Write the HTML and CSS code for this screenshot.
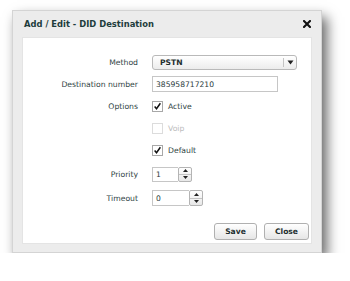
FILE: index.html
```html
<!DOCTYPE html>
<html>
<head>
<meta charset="utf-8">
<link rel="stylesheet" href="styles.css">
</head>
<body>
<div class="dialog">
  <div class="titlebar">
    <span class="title">Add / Edit - DID Destination</span>
    <span class="close"><svg width="8" height="8" viewBox="0 0 8 8"><path d="M1 1 L7 7 M7 1 L1 7" stroke="#111" stroke-width="2.1" stroke-linecap="square"/></svg></span>
  </div>
  <div class="panel">
    <div class="form">
      <label class="lbl">Method</label>
      <div class="select"><span class="sel-text">PSTN</span><span class="sel-arrow"><svg width="7" height="5" viewBox="0 0 7 5"><path d="M0.5 0.5 L6.5 0.5 L3.5 4.5 Z" fill="#222"/></svg></span></div>

      <label class="lbl">Destination number</label>
      <div class="input wide">385958717210</div>

      <label class="lbl">Options</label>
      <div class="check"><span class="box on"><svg width="11" height="11" viewBox="0 0 11 11"><path d="M2 5.5 L4.3 8.3 L9 1.5" fill="none" stroke="#111" stroke-width="1.8"/></svg></span><span class="ctext">Active</span></div>

      <span></span>
      <div class="check disabled"><span class="box"></span><span class="ctext">Voip</span></div>

      <span></span>
      <div class="check"><span class="box on"><svg width="11" height="11" viewBox="0 0 11 11"><path d="M2 5.5 L4.3 8.3 L9 1.5" fill="none" stroke="#111" stroke-width="1.8"/></svg></span><span class="ctext">Default</span></div>

      <label class="lbl">Priority</label>
      <div class="spin"><div class="input num p">1</div><div class="spinbtn"><span class="up"><svg width="5" height="3" viewBox="0 0 5 3"><path d="M0 3 L2.5 0 L5 3 Z" fill="#222"/></svg></span><span class="down"><svg width="5" height="3" viewBox="0 0 5 3"><path d="M0 0 L2.5 3 L5 0 Z" fill="#222"/></svg></span></div></div>

      <label class="lbl">Timeout</label>
      <div class="spin"><div class="input num t">0</div><div class="spinbtn"><span class="up"><svg width="5" height="3" viewBox="0 0 5 3"><path d="M0 3 L2.5 0 L5 3 Z" fill="#222"/></svg></span><span class="down"><svg width="5" height="3" viewBox="0 0 5 3"><path d="M0 0 L2.5 3 L5 0 Z" fill="#222"/></svg></span></div></div>
    </div>
    <div class="buttons">
      <button class="btn save">Save</button>
      <button class="btn closebtn">Close</button>
    </div>
  </div>
</div>
</body>
</html>
```

FILE: styles.css
```css
html, body {
  margin: 0;
  padding: 0;
  background: #ffffff;
}
body {
  font-family: "DejaVu Sans", Verdana, sans-serif;
  color: #2f4444;
}
.dialog {
  margin: 10px 0 0 12px;
  width: 308px;
  height: 241px;
  background: #ececec;
  border: 1px solid #d4d4d4;
  box-shadow: 5px 7px 12px rgba(0, 0, 0, 0.6);
  display: flex;
  flex-direction: column;
}
.titlebar {
  height: 26px;
  display: flex;
  align-items: center;
  justify-content: space-between;
  padding: 0 10px 0 11px;
}
.title {
  font-weight: bold;
  font-size: 8.4px;
  color: #1e3c3c;
}
.close {
  display: flex;
}
.close svg {
  display: block;
}
.panel {
  margin: 0 9px 8px 9px;
  background: #ffffff;
  flex: 1;
  display: flex;
  flex-direction: column;
  border: 1px solid #e4e4e4;
}
.form {
  display: grid;
  grid-template-columns: 115px auto;
  grid-template-rows: 22px 22px 22px 22px 22px 26px 22px;
  column-gap: 14px;
  align-items: center;
  padding-top: 13px;
}
.lbl {
  text-align: right;
  font-size: 7.7px;
  color: #2f4444;
}
.select {
  width: 143px;
  height: 13px;
  border: 1px solid #b9b9b9;
  border-radius: 3px;
  background: linear-gradient(#ffffff, #ececec);
  display: flex;
  align-items: center;
  justify-content: space-between;
}
.sel-text {
  font-weight: bold;
  font-size: 7.6px;
  color: #1e2e2e;
  padding-left: 7px;
}
.sel-arrow {
  height: 9px;
  border-left: 1px solid #c4c4c4;
  width: 12px;
  display: flex;
  align-items: center;
  justify-content: center;
}
.input {
  height: 15px;
  box-sizing: border-box;
  border: 1px solid #c6c6c6;
  background: #fff;
  font-size: 7.6px;
  color: #2a3a3a;
  display: flex;
  align-items: center;
  padding-left: 3px;
}
.input.wide {
  width: 126px;
  height: 16px;
}
.check {
  display: flex;
  align-items: center;
  gap: 5px;
}
.box {
  width: 11px;
  height: 11px;
  box-sizing: border-box;
  border: 1px solid #a8a8a8;
  background: #fff;
  display: flex;
  align-items: center;
  justify-content: center;
}
.box svg {
  display: block;
}
.ctext {
  font-size: 7.7px;
  color: #2f4444;
}
.check.disabled .box {
  border-color: #dcdcdc;
}
.check.disabled .ctext {
  color: #bcbcbc;
}
.spin {
  display: flex;
}
.input.num {
  border-right: none;
}
.input.p {
  width: 26px;
}
.input.t {
  width: 37px;
  height: 16px;
}
.spinbtn {
  width: 14px;
  box-sizing: border-box;
  border: 1px solid #b4b4b4;
  border-radius: 2px;
  background: linear-gradient(#ffffff, #e8e8e8);
  display: flex;
  flex-direction: column;
}
.spinbtn span {
  flex: 1;
  display: flex;
  align-items: center;
  justify-content: center;
}
.spinbtn .up {
  border-bottom: 1px solid #c4c4c4;
}
.buttons {
  margin-top: auto;
  display: flex;
  justify-content: flex-end;
  gap: 7px;
  padding: 0 2px 3px 0;
}
.btn {
  height: 17px;
  padding: 0;
  border: 1px solid #b0b0b0;
  border-radius: 3px;
  background: linear-gradient(#ffffff, #e6e6e6);
  font-family: "DejaVu Sans", Verdana, sans-serif;
  font-weight: bold;
  font-size: 7.6px;
  color: #1e3030;
}
.btn.save {
  width: 43px;
}
.btn.closebtn {
  width: 45px;
}
```
